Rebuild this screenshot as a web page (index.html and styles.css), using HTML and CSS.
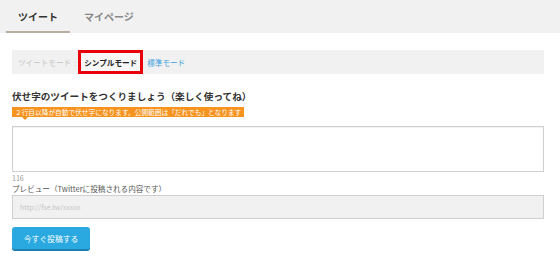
FILE: index.html
```html
<!DOCTYPE html>
<html lang="ja">
<head>
<meta charset="utf-8">
<link rel="stylesheet" href="styles.css">
</head>
<body>
<div class="header">
  <div class="tab active">ツイート</div>
  <div class="tab">マイページ</div>
</div>
<div class="content">
  <div class="modebar">
    <span class="mode off">ツイートモード</span>
    <span class="sep">:</span>
    <span class="mode current">シンプルモード</span>
    <span class="mode link">標準モード</span>
  </div>
  <h2 class="title">伏せ字のツイートをつくりましょう（楽しく使ってね）</h2>
  <div class="notice">２行目以降が自動で伏せ字になります。公開範囲は「だれでも」となります</div>
  <div class="editor"></div>
  <div class="count">116</div>
  <div class="label">プレビュー（Twitterに投稿される内容です）</div>
  <div class="preview">http://fse.tw/xxxxx</div>
  <button class="submit">今すぐ投稿する</button>
</div>
</body>
</html>
```
FILE: styles.css
```css
* { box-sizing: border-box; }
body {
  margin: 0;
  background: #fff;
  font-family: "Noto Sans CJK JP", "Noto Sans", sans-serif;
  color: #333;
}
.header {
  height: 33px;
  background: #f1f1f1;
  display: flex;
  align-items: stretch;
  padding-left: 6px;
  gap: 2px;
}
.tab {
  padding: 0 12px;
  font-size: 10px;
  line-height: 10px;
  font-weight: bold;
  color: #888;
  display: flex;
  align-items: center;
  border-bottom: 2px solid transparent;
  padding-top: 2px;
}
.tab.active {
  color: #333;
  border-bottom-color: #bcae9e;
}
.content {
  padding: 17px 16px 0 12px;
}
.modebar {
  height: 24px;
  background: #f1f1f1;
  display: flex;
  align-items: center;
  padding-left: 6px;
  font-size: 7.6px;
}
.mode.off { color: #c4c4c4; }
.sep { color: #ccc; margin: 0 2px 0 3px; }
.mode.current {
  border: 3px solid #e8000b;
  background: #f7f7f7;
  color: #222;
  font-weight: bold;
  height: 24px;
  display: flex;
  align-items: center;
  padding: 0 3px 0 3px;
}
.mode.link { color: #3d9fdc; margin-left: 4px; }
.title {
  margin: 15px 0 0;
  font-size: 9.6px;
  line-height: 14px;
  font-weight: bold;
  color: #333;
}
.notice {
  position: relative;
  width: fit-content;
  margin-top: 4px;
  background: #f7931e;
  color: #fff;
  font-size: 6.7px;
  line-height: 10px;
  height: 10px;
  padding: 0 3px;
}
.notice::after {
  content: "";
  position: absolute;
  left: 10px;
  top: 10px;
  border-left: 3px solid transparent;
  border-right: 3px solid transparent;
  border-top: 3px solid #f7931e;
}
.editor {
  margin-top: 9px;
  height: 46px;
  border: 1px solid #cfcfcf;
  background: #fff;
  box-shadow: inset 0 1px 1px rgba(0,0,0,0.06);
}
.count {
  margin-top: 1px;
  font-size: 7px;
  line-height: 10px;
  color: #999;
}
.label {
  font-size: 7.6px;
  line-height: 12px;
  color: #555;
}
.preview {
  height: 24px;
  background: #f1f1f1;
  border: 1px solid #cfcfcf;
  padding-left: 7px;
  font-size: 7px;
  line-height: 22px;
  color: #c6c6c6;
}
.submit {
  display: block;
  margin-top: 8px;
  width: 78px;
  height: 24px;
  background: #2aa9e0;
  border: none;
  border-bottom: 2px solid #1b7fb0;
  border-radius: 3px;
  color: #fff;
  font-family: inherit;
  font-size: 7.8px;
  padding: 0;
}
```
